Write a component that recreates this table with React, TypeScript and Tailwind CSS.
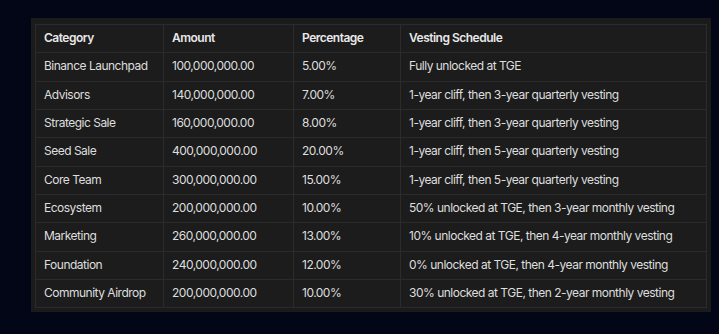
import React from "react";

const rows = [
  ["Binance Launchpad", "100,000,000.00", "5.00%", "Fully unlocked at TGE"],
  ["Advisors", "140,000,000.00", "7.00%", "1-year cliff, then 3-year quarterly vesting"],
  ["Strategic Sale", "160,000,000.00", "8.00%", "1-year cliff, then 3-year quarterly vesting"],
  ["Seed Sale", "400,000,000.00", "20.00%", "1-year cliff, then 5-year quarterly vesting"],
  ["Core Team", "300,000,000.00", "15.00%", "1-year cliff, then 5-year quarterly vesting"],
  ["Ecosystem", "200,000,000.00", "10.00%", "50% unlocked at TGE, then 3-year monthly vesting"],
  ["Marketing", "260,000,000.00", "13.00%", "10% unlocked at TGE, then 4-year monthly vesting"],
  ["Foundation", "240,000,000.00", "12.00%", "0% unlocked at TGE, then 4-year monthly vesting"],
  ["Community Airdrop", "200,000,000.00", "10.00%", "30% unlocked at TGE, then 2-year monthly vesting"],
];

const widths = ["w-[128px]", "w-[130px]", "w-[107px]", "flex-1"];

function Row({ cells, head }: { cells: string[]; head?: boolean }) {
  return (
    <div className="flex h-[28.33px]">
      {cells.map((c, i) => (
        <div
          key={i}
          className={`${widths[i]} flex items-center border-r border-b border-[#2b2b2b] pl-[8px] pb-[1px] ${
            head ? "font-semibold text-[#e8e8e8]" : "text-[#dedede]"
          }`}
        >
          {c}
        </div>
      ))}
    </div>
  );
}

export default function App() {
  return (
    <div
      className="w-[719px] h-[334px] bg-[#030617] pt-[18px] pl-[31px]"
      style={{ fontFamily: "Inter, 'Noto Sans', sans-serif" }}
    >
      <div className="w-[680px] h-[294px] bg-[#1b1b1b] pt-[6px] pl-[4px]">
        <div className="w-[672px] border-t border-l border-[#2b2b2b] bg-[#1c1c1c] text-[12px] tracking-[-0.5px]">
          <Row head cells={["Category", "Amount", "Percentage", "Vesting Schedule"]} />
          {rows.map((r, i) => (
            <Row key={i} cells={r} />
          ))}
        </div>
      </div>
    </div>
  );
}
